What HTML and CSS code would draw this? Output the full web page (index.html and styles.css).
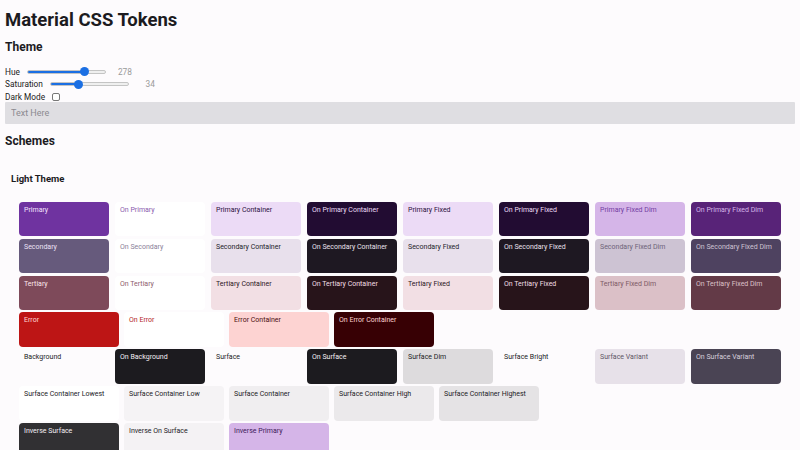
FILE: index.html
```html
<!DOCTYPE html>
<html>
<head>
<meta charset="utf-8">
<link rel="stylesheet" href="styles.css">
</head>
<body>
<h1 class="title">Material CSS Tokens</h1>
<h2 class="section">Theme</h2>
<div class="controls">
  <label class="ctl">
    <span class="ctl-label">Hue</span>
    <input class="range" type="range" min="0" max="360" value="278" style="--p:74%">
    <span class="ctl-value">278</span>
  </label>
  <label class="ctl">
    <span class="ctl-label">Saturation</span>
    <input class="range" type="range" min="0" max="100" value="34" style="--p:36%">
    <span class="ctl-value">34</span>
  </label>
  <label class="ctl">
    <span class="ctl-label">Dark Mode</span>
    <input class="check" type="checkbox">
  </label>
</div>
<input class="text-input" type="text" placeholder="Text Here">
<h2 class="section schemes">Schemes</h2>
<div class="scheme">
  <h3 class="scheme-title">Light Theme</h3>
  <div class="rows">
    <div class="row row8">
      <div class="cell primary">Primary</div>
      <div class="cell on-primary">On Primary</div>
      <div class="cell primary-container">Primary Container</div>
      <div class="cell on-primary-container">On Primary Container</div>
      <div class="cell primary-fixed">Primary Fixed</div>
      <div class="cell on-primary-fixed">On Primary Fixed</div>
      <div class="cell primary-fixed-dim">Primary Fixed Dim</div>
      <div class="cell on-primary-fixed-dim">On Primary Fixed Dim</div>
    </div>
    <div class="row row8">
      <div class="cell secondary">Secondary</div>
      <div class="cell on-secondary">On Secondary</div>
      <div class="cell secondary-container">Secondary Container</div>
      <div class="cell on-secondary-container">On Secondary Container</div>
      <div class="cell secondary-fixed">Secondary Fixed</div>
      <div class="cell on-secondary-fixed">On Secondary Fixed</div>
      <div class="cell secondary-fixed-dim">Secondary Fixed Dim</div>
      <div class="cell on-secondary-fixed-dim">On Secondary Fixed Dim</div>
    </div>
    <div class="row row8">
      <div class="cell tertiary">Tertiary</div>
      <div class="cell on-tertiary">On Tertiary</div>
      <div class="cell tertiary-container">Tertiary Container</div>
      <div class="cell on-tertiary-container">On Tertiary Container</div>
      <div class="cell tertiary-fixed">Tertiary Fixed</div>
      <div class="cell on-tertiary-fixed">On Tertiary Fixed</div>
      <div class="cell tertiary-fixed-dim">Tertiary Fixed Dim</div>
      <div class="cell on-tertiary-fixed-dim">On Tertiary Fixed Dim</div>
    </div>
    <div class="row row5">
      <div class="cell error">Error</div>
      <div class="cell on-error">On Error</div>
      <div class="cell error-container">Error Container</div>
      <div class="cell on-error-container">On Error Container</div>
    </div>
    <div class="row row8">
      <div class="cell background">Background</div>
      <div class="cell on-background">On Background</div>
      <div class="cell surface">Surface</div>
      <div class="cell on-surface">On Surface</div>
      <div class="cell surface-dim">Surface Dim</div>
      <div class="cell surface-bright">Surface Bright</div>
      <div class="cell surface-variant">Surface Variant</div>
      <div class="cell on-surface-variant">On Surface Variant</div>
    </div>
    <div class="row row5">
      <div class="cell sc-lowest">Surface Container Lowest</div>
      <div class="cell sc-low">Surface Container Low</div>
      <div class="cell sc">Surface Container</div>
      <div class="cell sc-high">Surface Container High</div>
      <div class="cell sc-highest">Surface Container Highest</div>
    </div>
    <div class="row row5">
      <div class="cell inverse-surface">Inverse Surface</div>
      <div class="cell inverse-on-surface">Inverse On Surface</div>
      <div class="cell inverse-primary">Inverse Primary</div>
    </div>
  </div>
</div>
</body>
</html>
```
FILE: styles.css
```css
html, body {
  margin: 0;
  padding: 0;
  background: #fdfbfd;
}
body {
  padding: 0 5px;
  font-family: Roboto, "Liberation Sans", sans-serif;
  color: #1c1b1f;
  overflow: hidden;
}
.title {
  margin: 8.5px 0 0;
  font-size: 18.5px;
  line-height: 22px;
  font-weight: 700;
}
.section {
  margin: 9px 0 0;
  font-size: 12px;
  line-height: 14px;
  font-weight: 700;
}
.controls {
  margin-top: 12px;
  display: flex;
  flex-direction: column;
}
.ctl {
  display: flex;
  align-items: center;
  height: 12.6px;
  font-size: 8.3px;
  color: #222;
}
.ctl-label {
  margin-right: 7px;
}
.ctl-value {
  width: 26px;
  text-align: right;
  color: #9a9a9a;
}
.range {
  -webkit-appearance: none;
  appearance: none;
  width: 79px;
  height: 4px;
  margin: 0;
  border-radius: 3px;
  border: 0.5px solid #c4c4c4;
  box-sizing: border-box;
  background: linear-gradient(to right, #1b6fe3 var(--p), #efefef var(--p));
}
.range::-webkit-slider-thumb {
  -webkit-appearance: none;
  appearance: none;
  width: 9px;
  height: 9px;
  border-radius: 50%;
  background: #1b6fe3;
  border: none;
}
.check {
  -webkit-appearance: none;
  appearance: none;
  width: 8px;
  height: 8px;
  margin: 0;
  border: 1px solid #777;
  border-radius: 2px;
  box-sizing: border-box;
  background: #fff;
}
.text-input {
  display: block;
  box-sizing: border-box;
  width: 100%;
  height: 22px;
  margin-top: -1px;
  border: none;
  border-radius: 1px;
  background: #dfdee2;
  padding: 0 6px;
  font-family: Roboto, "Liberation Sans", sans-serif;
  font-size: 9px;
  outline: none;
}
.text-input::placeholder {
  color: #8c8a90;
}
.schemes {
  margin-top: 10px;
}
.scheme {
  padding: 0 14px;
}
.scheme-title {
  margin: 25px 0 0 -8px;
  font-size: 9.5px;
  line-height: 11px;
  font-weight: 700;
}
.rows {
  margin-top: 17.5px;
  display: flex;
  flex-direction: column;
  gap: 2.4px;
}
.row {
  display: grid;
  height: 34.5px;
}
.row8 {
  grid-template-columns: repeat(8, 90px);
  column-gap: 6px;
}
.row5 {
  grid-template-columns: repeat(5, 99.5px);
  column-gap: 5.5px;
}
.cell {
  border-radius: 4px;
  padding: 4px 5px;
  font-size: 7px;
  line-height: 9px;
  box-sizing: border-box;
  white-space: nowrap;
  overflow: hidden;
}
.primary { background: #6f33a0; color: #f3e3ff; }
.on-primary { background: #ffffff; color: #8a5cae; }
.primary-container { background: #ecdbf6; color: #2b1040; }
.on-primary-container { background: #220c32; color: #ecdbf6; }
.primary-fixed { background: #ecdbf6; color: #2b1040; }
.on-primary-fixed { background: #220c32; color: #ecdbf6; }
.primary-fixed-dim { background: #d5b5e8; color: #7440a3; }
.on-primary-fixed-dim { background: #582378; color: #d5b5e8; }
.secondary { background: #665a7c; color: #ece2f6; }
.on-secondary { background: #ffffff; color: #8b8199; }
.secondary-container { background: #e8e0ec; color: #231d2a; }
.on-secondary-container { background: #1e1822; color: #e8e0ec; }
.secondary-fixed { background: #e8e0ec; color: #231d2a; }
.on-secondary-fixed { background: #1e1822; color: #e8e0ec; }
.secondary-fixed-dim { background: #cdc3d3; color: #6e6479; }
.on-secondary-fixed-dim { background: #4e4260; color: #cdc3d3; }
.tertiary { background: #7e4a5a; color: #fde6ec; }
.on-tertiary { background: #ffffff; color: #8e5e6c; }
.tertiary-container { background: #f2dfe4; color: #2c161d; }
.on-tertiary-container { background: #27141a; color: #f2dfe4; }
.tertiary-fixed { background: #f2dfe4; color: #2c161d; }
.on-tertiary-fixed { background: #27141a; color: #f2dfe4; }
.tertiary-fixed-dim { background: #dbc0c7; color: #7e5a66; }
.on-tertiary-fixed-dim { background: #633a47; color: #dbc0c7; }
.error { background: #bd1515; color: #ffd6d4; }
.on-error { background: #ffffff; color: #b3262a; }
.error-container { background: #fdd3d2; color: #4a0f10; }
.on-error-container { background: #370004; color: #fdd3d2; }
.background { background: #fdfbfd; color: #1c1b1f; }
.on-background { background: #1c1b1f; color: #f4eff4; }
.surface { background: #fdfbfd; color: #1c1b1f; }
.on-surface { background: #1c1b1f; color: #f4eff4; }
.surface-dim { background: #dddbdd; color: #1c1b1f; }
.surface-bright { background: #fdfbfd; color: #1c1b1f; }
.surface-variant { background: #e7e1e9; color: #5d5765; }
.on-surface-variant { background: #4a4454; color: #d8d0de; }
.sc-lowest { background: #ffffff; color: #1c1b1f; }
.sc-low { background: #f5f3f5; color: #1c1b1f; }
.sc { background: #f0eef0; color: #1c1b1f; }
.sc-high { background: #ebe9eb; color: #1c1b1f; }
.sc-highest { background: #e5e3e5; color: #1c1b1f; }
.inverse-surface { background: #313033; color: #f4eff4; }
.inverse-on-surface { background: #f4f2f4; color: #1c1b1f; }
.inverse-primary { background: #d5b5e8; color: #3d1a5a; }
```
